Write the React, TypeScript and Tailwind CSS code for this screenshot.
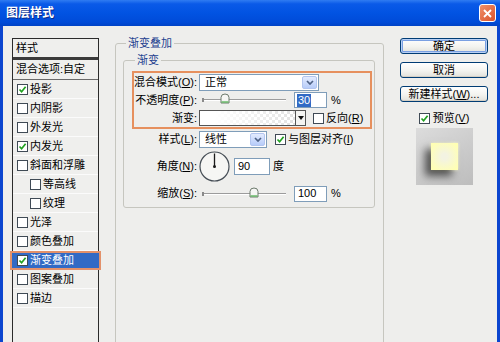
import React from "react";

function Check({ checked = false }: { checked?: boolean }) {
  return (
    <span className="flex h-[11px] w-[11px] shrink-0 items-center justify-center border border-[#3f4a55] bg-white">
      {checked && (
        <svg width="9" height="9" viewBox="0 0 9 9">
          <path d="M1.5 4.5 L3.6 6.8 L7.6 1.8" fill="none" stroke="#21a121" strokeWidth="1.7" />
        </svg>
      )}
    </span>
  );
}

function Select({ value, width }: { value: string; width: string }) {
  return (
    <div className={`flex h-[17px] items-center border border-[#7f9db9] bg-white ${width}`}>
      <span className="flex-1 pl-[5px]">{value}</span>
      <span className="mr-[1px] flex h-[13px] w-[15px] items-center justify-center rounded-[2px] border border-[#b2c5ef] bg-[linear-gradient(#e3ebfe,#b7ccf9)]">
        <svg width="8" height="5" viewBox="0 0 8 5">
          <path d="M1 1 L4 4 L7 1" fill="none" stroke="#4d6185" strokeWidth="1.7" />
        </svg>
      </span>
    </div>
  );
}

function Slider({ thumb }: { thumb: string }) {
  return (
    <div className="relative h-[18px] w-[87px] shrink-0">
      <div className="absolute left-[4px] right-0 top-[8px] h-[2px] border-t border-b border-t-[#9c9c9c] border-b-white" />
      <div className="absolute left-[3px] top-[7px] h-[4px] w-[2px] bg-[#8a8a8a]" />
      <svg className={`absolute top-[2px] ${thumb}`} width="10" height="11" viewBox="0 0 10 11">
        <path d="M1 10 L1 4.5 Q1 1 5 1 Q9 1 9 4.5 L9 10 Z" fill="#f6f6f4" stroke="#6d7a6d" strokeWidth="1" />
        <line x1="1.5" y1="9" x2="8.5" y2="9" stroke="#5fb65f" strokeWidth="1.4" />
      </svg>
    </div>
  );
}

function Field({ children, width }: { children: React.ReactNode; width: string }) {
  return (
    <div className={`flex h-[16px] items-center border border-[#7f9db9] bg-white pl-[2px] ${width}`}>
      {children}
    </div>
  );
}

function Btn({ children, primary = false }: { children: React.ReactNode; primary?: boolean }) {
  return (
    <div
      className={`flex h-[16px] items-center justify-center rounded-[3px] border border-[#003c74] bg-[linear-gradient(#ffffff,#f3f3ef_55%,#e2e1da)] ${
        primary ? "shadow-[inset_0_0_0_1px_#b9d0f5,inset_0_0_0_2px_#7aa0e2]" : "shadow-[inset_0_-1px_0_#d4cfc4]"
      }`}
    >
      {children}
    </div>
  );
}

const styles = [
  { label: "投影", checked: true },
  { label: "内阴影" },
  { label: "外发光" },
  { label: "内发光", checked: true },
  { label: "斜面和浮雕" },
  { label: "等高线", indent: true },
  { label: "纹理", indent: true },
  { label: "光泽" },
  { label: "颜色叠加" },
  { label: "渐变叠加", checked: true, selected: true },
  { label: "图案叠加" },
  { label: "描边" },
];

export default function App() {
  return (
    <div className="flex h-[342px] w-[500px] flex-col overflow-hidden font-['Liberation_Sans','Noto_Sans_CJK_SC',sans-serif] text-[11px] text-black">
      {/* Title bar */}
      <div className="flex h-[26px] shrink-0 items-center justify-between bg-[linear-gradient(#2f7cf2_0%,#0a5ae8_15%,#0153e2_50%,#004bd8_85%,#0043c6_100%)] pl-[6px] pr-[4px]">
        <span className="text-[12px] font-bold text-white [text-shadow:1px_1px_0_#0a2a8a]">图层样式</span>
        <div className="flex h-[18px] w-[17px] items-center justify-center rounded-[3px] border border-white bg-[linear-gradient(135deg,#f0906a,#d9532c)]">
          <svg width="9" height="9" viewBox="0 0 9 9">
            <path d="M1 1 L8 8 M8 1 L1 8" stroke="white" strokeWidth="1.8" />
          </svg>
        </div>
      </div>

      {/* Body */}
      <div className="flex flex-1 border-x-[3px] border-[#0b45cf] bg-[#eeeeec] px-[9px]">
        {/* Style list */}
        <div className="mt-[12px] h-[320px] w-[87px] shrink-0 border border-[#2b2b2b] bg-[#efefed]">
          <div className="flex h-[21px] items-center border-b-[3px] border-[#3a3a3a] pl-[3px]">样式</div>
          <div className="flex h-[20px] items-center border-b border-[#6a6a6a] pl-[3px]">混合选项:自定</div>
          {styles.map((s) =>
            s.selected ? (
              <div
                key={s.label}
                className="-mx-[3px] flex h-[19px] items-center gap-[2px] border-2 border-[#e3916a] bg-[#316ac5] pl-[5px] text-white"
              >
                <Check checked />
                <span>{s.label}</span>
              </div>
            ) : (
              <div
                key={s.label}
                className={`flex h-[19px] items-center gap-[2px] border-b border-[#fbfbfb] ${s.indent ? "pl-[17px]" : "pl-[4px]"}`}
              >
                <Check checked={s.checked} />
                <span>{s.label}</span>
              </div>
            )
          )}
        </div>

        {/* Gradient overlay settings */}
        <fieldset className="ml-[16px] mt-[10px] h-[330px] w-[269px] shrink-0 rounded-[3px] border border-[#c6c6bf] p-0">
          <legend className="ml-[10px] px-[2px] leading-[14px] text-[#1d3f8f]">渐变叠加</legend>
          <div className="pl-[7px] pr-[8px] pt-[3px]">
            <fieldset className="rounded-[3px] border border-[#c6c6bf] p-0 pb-[4px]">
              <legend className="ml-[11px] px-[2px] leading-[14px] text-[#1d3f8f]">渐变</legend>
              <div className="pl-[8px] pr-[2px] pt-[4px]">
                <div className="border-2 border-[#e6905e]">
                  <div className="flex h-[18px] items-center">
                    <span className="w-[63px] text-right">
                      混合模式(<u>O</u>):
                    </span>
                    <div className="ml-[2px]">
                      <Select value="正常" width="w-[120px]" />
                    </div>
                  </div>
                  <div className="flex h-[18px] items-center">
                    <span className="w-[63px] text-right">
                      不透明度(<u>P</u>):
                    </span>
                    <div className="ml-[2px]">
                      <Slider thumb="left-[21px]" />
                    </div>
                    <div className="ml-[8px]">
                      <Field width="w-[33px]">
                        <span className="bg-[#316ac5] px-[1px] leading-[13px] text-white">30</span>
                      </Field>
                    </div>
                    <span className="ml-[4px]">%</span>
                  </div>
                  <div className="flex h-[18px] items-center">
                    <span className="w-[63px] text-right">渐变:</span>
                    <div className="ml-[2px] flex h-[16px] w-[107px] border border-[#555]">
                      <div className="flex-1 bg-[image:repeating-conic-gradient(#e2e2e2_0%_25%,#ffffff_0%_50%)] bg-[length:6px_6px]">
                        <div className="h-full w-full bg-linear-to-r from-white from-15% to-white/0" />
                      </div>
                      <div className="flex w-[10px] items-center justify-center border-l border-[#555] bg-[#f4f4f2]">
                        <svg width="6" height="4" viewBox="0 0 6 4">
                          <path d="M0 0 L6 0 L3 4 Z" fill="#111" />
                        </svg>
                      </div>
                    </div>
                    <div className="ml-[7px]">
                      <Check />
                    </div>
                    <span className="ml-[2px]">
                      反向(<u>R</u>)
                    </span>
                  </div>
                </div>

                <div className="mt-[1px] flex h-[19px] items-center">
                  <span className="w-[65px] text-right">
                    样式(<u>L</u>):
                  </span>
                  <div className="ml-[2px]">
                    <Select value="线性" width="w-[68px]" />
                  </div>
                  <div className="ml-[8px]">
                    <Check checked />
                  </div>
                  <span className="ml-[2px] whitespace-nowrap">
                    与图层对齐(<u>I</u>)
                  </span>
                </div>

                <div className="flex h-[35px] items-center">
                  <span className="w-[65px] text-right">
                    角度(<u>N</u>):
                  </span>
                  <svg className="ml-[2px]" width="31" height="31" viewBox="0 0 31 31">
                    <circle cx="15.5" cy="15.5" r="14.5" fill="#f6f6f4" stroke="#454d55" strokeWidth="1.2" />
                    <line x1="15.5" y1="15.5" x2="15.5" y2="2.5" stroke="#1a1a1a" strokeWidth="1.3" />
                    <circle cx="15.5" cy="15.5" r="1.5" fill="#1a1a1a" />
                  </svg>
                  <div className="ml-[4px]">
                    <div className="flex h-[17px] w-[36px] items-center border border-[#7f9db9] bg-white pl-[3px]">90</div>
                  </div>
                  <span className="ml-[3px]">度</span>
                </div>

                <div className="flex h-[19px] items-center">
                  <span className="w-[65px] text-right">
                    缩放(<u>S</u>):
                  </span>
                  <div className="ml-[2px]">
                    <Slider thumb="left-[50px]" />
                  </div>
                  <div className="ml-[8px]">
                    <Field width="w-[33px]">
                      <span className="pl-[1px]">100</span>
                    </Field>
                  </div>
                  <span className="ml-[4px]">%</span>
                </div>
              </div>
            </fieldset>
          </div>
        </fieldset>

        {/* Buttons */}
        <div className="ml-[16px] mt-[12px] flex w-[88px] shrink-0 flex-col gap-[8px]">
          <Btn primary>确定</Btn>
          <Btn>取消</Btn>
          <Btn>
            新建样式(<u>W</u>)...
          </Btn>
          <div className="-mt-[2px] flex h-[20px] items-center justify-center gap-[3px]">
            <Check checked />
            <span>
              预览(<u>V</u>)
            </span>
          </div>
          <div className="-mt-[8px] mx-auto flex h-[57px] w-[57px] items-center justify-center bg-[linear-gradient(150deg,#dcdcdc,#c9c9c9_60%,#bdbdbd)]">
            <div className="h-[27px] w-[27px] bg-[radial-gradient(circle,#f3f3e2_15%,#ffffb4_85%)] shadow-[-6px_6px_8px_rgba(0,0,0,0.6),0_0_3px_#ffffd0]" />
          </div>
        </div>
      </div>
    </div>
  );
}
